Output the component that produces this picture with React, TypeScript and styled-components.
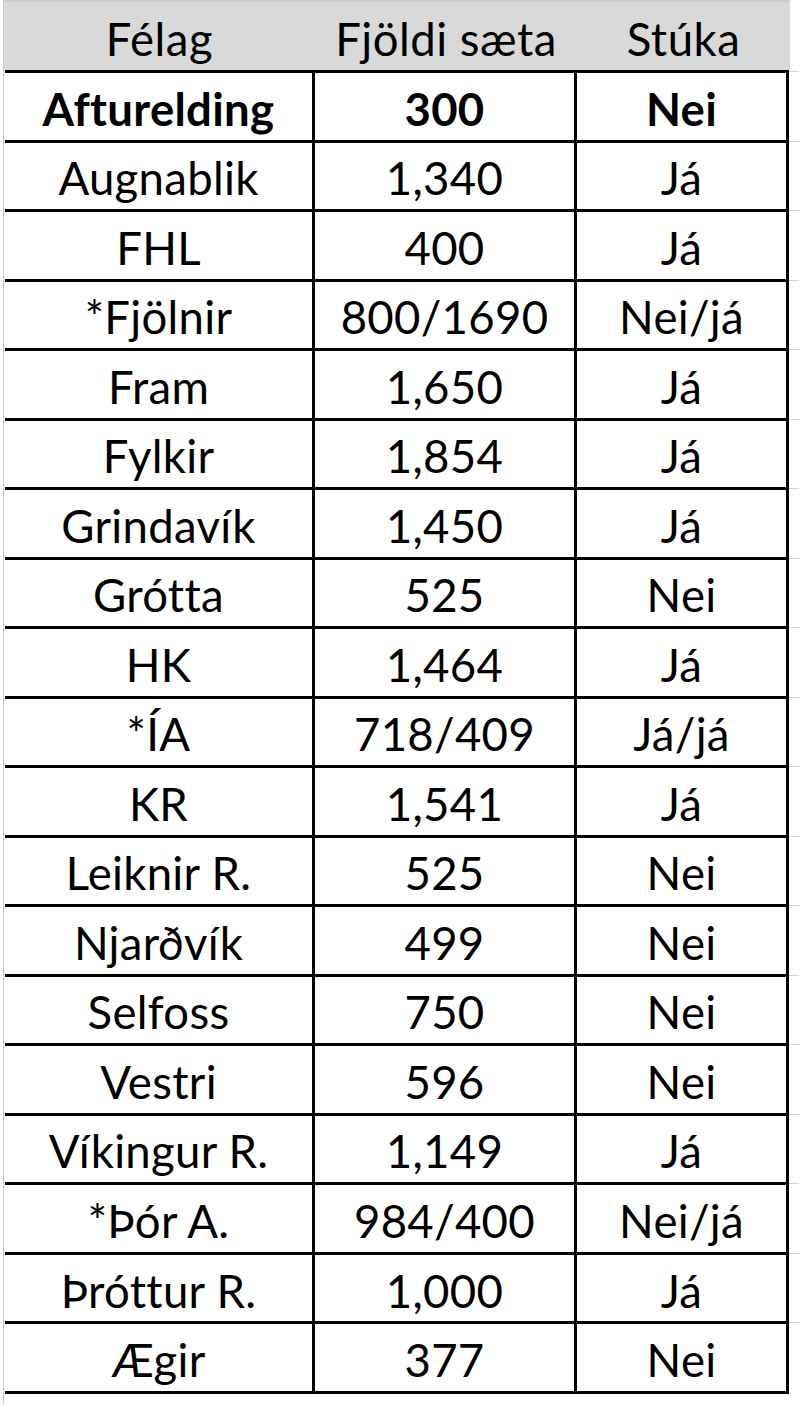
import React from "react";
import styled, { createGlobalStyle } from "styled-components";

const GlobalStyle = createGlobalStyle`
  html, body {
    margin: 0;
    padding: 0;
    background: #ffffff;
  }
  body {
    font-family: Lato, "Open Sans", sans-serif;
    color: #000;
  }
`;

type Club = {
  name: string;
  seats: string;
  stand: string;
  bold?: boolean;
};

const clubs: Club[] = [
  { name: "Afturelding", seats: "300", stand: "Nei", bold: true },
  { name: "Augnablik", seats: "1,340", stand: "Já" },
  { name: "FHL", seats: "400", stand: "Já" },
  { name: "*Fjölnir", seats: "800/1690", stand: "Nei/já" },
  { name: "Fram", seats: "1,650", stand: "Já" },
  { name: "Fylkir", seats: "1,854", stand: "Já" },
  { name: "Grindavík", seats: "1,450", stand: "Já" },
  { name: "Grótta", seats: "525", stand: "Nei" },
  { name: "HK", seats: "1,464", stand: "Já" },
  { name: "*ÍA", seats: "718/409", stand: "Já/já" },
  { name: "KR", seats: "1,541", stand: "Já" },
  { name: "Leiknir R.", seats: "525", stand: "Nei" },
  { name: "Njarðvík", seats: "499", stand: "Nei" },
  { name: "Selfoss", seats: "750", stand: "Nei" },
  { name: "Vestri", seats: "596", stand: "Nei" },
  { name: "Víkingur R.", seats: "1,149", stand: "Já" },
  { name: "*Þór A.", seats: "984/400", stand: "Nei/já" },
  { name: "Þróttur R.", seats: "1,000", stand: "Já" },
  { name: "Ægir", seats: "377", stand: "Nei" },
];

const Sheet = styled.div`
  margin-left: 3px;
  border-left: 1px solid #c9c9c9;
  width: 797px;
  min-height: 1405px;
  box-sizing: border-box;
`;

const HeaderRow = styled.div`
  display: grid;
  grid-template-columns: 311px 262px 213px;
  width: 786px;
  height: 70px;
  background: #d9d9d9;
  border-top: 2px solid #cdcdcd;
  box-sizing: border-box;
`;

const Table = styled.div`
  margin-left: 1px;
  width: 784px;
  border-bottom: 3px solid #000;
`;

const Row = styled.div`
  display: grid;
  grid-template-columns: 310px 262px 212px;
  height: 69.53px;
  box-sizing: border-box;
  border-top: 3px solid #000;
  position: relative;

  &::after {
    content: "";
    position: absolute;
    left: 784px;
    top: -2px;
    width: 10px;
    height: 1px;
    background: #d4d4d4;
  }
`;

const Cell = styled.div<{ $bold?: boolean }>`
  display: flex;
  align-items: center;
  justify-content: center;
  padding-top: 4px;
  box-sizing: border-box;
  font-size: 45.5px;
  letter-spacing: 0.3px;
  font-weight: ${(p) => (p.$bold ? 700 : 400)};
  white-space: nowrap;
  border-right: 3px solid #000;
`;

const HeadCell = styled.div`
  display: flex;
  align-items: center;
  justify-content: center;
  padding-top: 4px;
  font-size: 45.5px;
  letter-spacing: 0.5px;
  white-space: nowrap;
`;

export default function App() {
  return (
    <>
      <GlobalStyle />
      <Sheet>
        <HeaderRow>
          <HeadCell>Félag</HeadCell>
          <HeadCell>Fjöldi sæta</HeadCell>
          <HeadCell>Stúka</HeadCell>
        </HeaderRow>
        <Table>
          {clubs.map((c) => (
            <Row key={c.name}>
              <Cell $bold={c.bold}>{c.name}</Cell>
              <Cell $bold={c.bold}>{c.seats}</Cell>
              <Cell $bold={c.bold}>{c.stand}</Cell>
            </Row>
          ))}
        </Table>
      </Sheet>
    </>
  );
}
